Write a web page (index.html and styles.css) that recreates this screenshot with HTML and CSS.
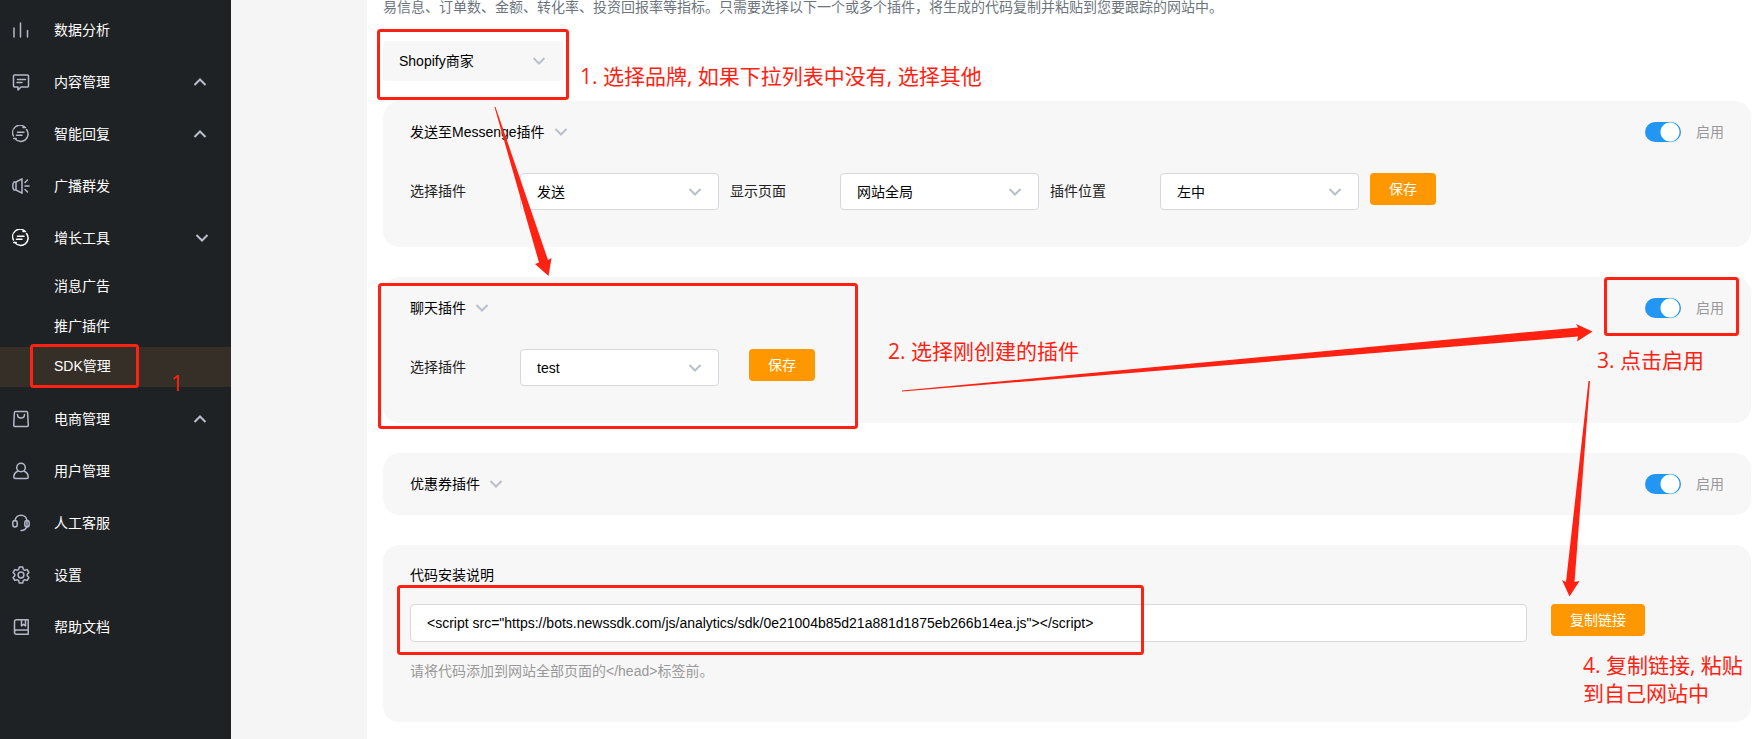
FILE: index.html
```
<!DOCTYPE html>
<html lang="zh-CN">
<head>
<meta charset="utf-8">
<title>SDK管理</title>
<link rel="stylesheet" href="styles.css">
</head>
<body>
<svg class="defs" aria-hidden="true">
  <symbol id="down" viewBox="0 0 14 10"><path d="M1.5 2 7 7.500l5.500-5.500" fill="none" stroke="currentColor" stroke-width="2"/></symbol>
  <symbol id="up" viewBox="0 0 14 10"><path d="M1.500 8 7 2.500 12.500 8" fill="none" stroke="currentColor" stroke-width="2"/></symbol>
  <symbol id="reply" viewBox="0 0 18 18"><path d="M13 2.300A7.300 7.300 0 0 0 1.500 11M3 13.600A7.300 7.300 0 0 0 14.500 4.500M5.500 7.300h6.500M4.500 10.300h5.500M11 2.500h2.500M1.700 13.500H4.200"/></symbol>
</svg>
<div class="page">
  <nav class="sidebar">
    <a class="item" href="#"><svg class="icon" viewBox="0 0 18 18"><path d="M2 7v9M8.500 2v14M15.500 9.500V16"/></svg><span class="name">数据分析</span></a>
    <a class="item" href="#"><svg class="icon" viewBox="0 0 18 18"><path d="M2.500 2h13q1 0 1 1v10q0 1-1 1H9l-3 3v-3H2.500q-1 0-1-1V3q0-1 1-1zM5.500 6.500h8M5 9.500h5"/></svg><span class="name">内容管理</span><svg class="chev"><use href="#up"/></svg></a>
    <a class="item" href="#"><svg class="icon"><use href="#reply"/></svg><span class="name">智能回复</span><svg class="chev"><use href="#up"/></svg></a>
    <a class="item" href="#"><svg class="icon" viewBox="0 0 18 18"><path d="M4 5l6-3.200v14.400L4 13zM4 5H2Q.800 6 .800 9T2 13h2M13 9h4M13 5.500l2.500-2.500M13 12.500l2.500 2.500"/></svg><span class="name">广播群发</span></a>
    <a class="item open" href="#"><svg class="icon"><use href="#reply"/></svg><span class="name">增长工具</span><svg class="chev"><use href="#down"/></svg></a>
    <div class="submenu">
      <a class="sub" href="#">消息广告</a>
      <a class="sub" href="#">推广插件</a>
      <a class="sub current" href="#">SDK管理</a>
    </div>
    <a class="item" href="#"><svg class="icon" viewBox="0 0 18 18"><path d="M3.500 1.500h11q1 0 1.100 1l.700 13q0 1-1 1H2.700q-1 0-1-1l.700-13q.100-1 1.100-1zM5.500 4.500q0 3.500 3.500 3.500t3.500-3.500"/></svg><span class="name">电商管理</span><svg class="chev"><use href="#up"/></svg></a>
    <a class="item" href="#"><svg class="icon" viewBox="0 0 18 18"><circle cx="9" cy="5.500" r="4.300"/><path d="M6 9Q1.800 11 1.800 15q0 1.500 1.500 1.500h11.400q1.500 0 1.500-1.500 0-4-4.200-6"/></svg><span class="name">用户管理</span></a>
    <a class="item" href="#"><svg class="icon" viewBox="0 0 18 18"><path d="M3 7C3.500-.800 14.500-.800 15 7v5q-1 4.500-6 4.500"/><rect x=".8" y="6.500" width="4.400" height="6.500" rx="2.200"/><rect x="12.800" y="6.500" width="4.400" height="6.500" rx="2.200"/></svg><span class="name">人工客服</span></a>
    <a class="item" href="#"><svg class="icon" viewBox="0 0 18 18"><path d="M7.300 1h3.400l.600 2.400 1.500.900 2.400-.700 1.700 2.900-1.700 1.700v1.600l1.700 1.700-1.700 2.900-2.400-.700-1.500.900-.600 2.400H7.300l-.600-2.400-1.500-.900-2.400.700-1.700-2.900 1.700-1.700V8.200L1.100 6.500l1.700-2.900 2.400.700 1.500-.900z"/><circle cx="9" cy="9" r="2.900"/></svg><span class="name">设置</span></a>
    <a class="item" href="#"><svg class="icon" viewBox="0 0 18 18"><path d="M16.200 1.800H4.500Q2.500 1.800 2.500 4v10.500q0 1.700 2 1.700h11.700zM2.500 14q0-2 2-2h11.700M9.500 2v6l2-1.800 2 1.800V2"/></svg><span class="name">帮助文档</span></a>
  </nav>

  <main class="content">
    <p class="intro">易信息、订单数、金额、转化率、投资回报率等指标。只需要选择以下一个或多个插件，将生成的代码复制并粘贴到您要跟踪的网站中。</p>
    <div class="picker brand"><select aria-label="品牌"><option>Shopify商家</option></select><svg class="chev"><use href="#down"/></svg></div>

    <section class="card">
      <header class="head">
        <button class="title" type="button">发送至Messenge插件<svg class="chev"><use href="#down"/></svg></button>
        <label class="toggle"><input type="checkbox" checked>启用</label>
      </header>
      <div class="row">
        <div class="field"><label for="send">选择插件</label><div class="picker"><select id="send"><option>发送</option></select><svg class="chev"><use href="#down"/></svg></div></div>
        <div class="field"><label for="where">显示页面</label><div class="picker"><select id="where"><option>网站全局</option></select><svg class="chev"><use href="#down"/></svg></div></div>
        <div class="field"><label for="place">插件位置</label><div class="picker"><select id="place"><option>左中</option></select><svg class="chev"><use href="#down"/></svg></div></div>
        <button class="btn" type="button">保存</button>
      </div>
    </section>

    <section class="card">
      <header class="head">
        <button class="title" type="button">聊天插件<svg class="chev"><use href="#down"/></svg></button>
        <label class="toggle"><input type="checkbox" checked>启用</label>
      </header>
      <div class="row wide">
        <div class="field"><label for="chat">选择插件</label><div class="picker"><select id="chat"><option>test</option></select><svg class="chev"><use href="#down"/></svg></div></div>
        <button class="btn" type="button">保存</button>
      </div>
    </section>

    <section class="card">
      <header class="head">
        <button class="title" type="button">优惠券插件<svg class="chev"><use href="#down"/></svg></button>
        <label class="toggle"><input type="checkbox" checked>启用</label>
      </header>
    </section>

    <section class="card">
      <label class="caption" for="code">代码安装说明</label>
      <div class="copy">
        <input class="code" id="code" type="text" readonly value="&lt;script src=&quot;https://bots.newssdk.com/js/analytics/sdk/0e21004b85d21a881d1875eb266b14ea.js&quot;&gt;&lt;/script&gt;">
        <button class="btn" type="button">复制链接</button>
      </div>
      <p class="hint">请将代码添加到网站全部页面的&lt;/head&gt;标签前。</p>
    </section>
  </main>

  <div class="notes">
    <svg class="marks" width="1753" height="739" viewBox="0 0 1753 739">
      <g class="frames">
        <rect x="31.500" y="345.500" width="106" height="41" rx="2"/>
        <rect x="378.500" y="30.500" width="189" height="68" rx="2"/>
        <rect x="379.500" y="284.500" width="477" height="143" rx="2"/>
        <rect x="1605.500" y="278.500" width="132" height="56" rx="2"/>
        <rect x="398.500" y="586.500" width="744" height="67" rx="2"/>
      </g>
      <g class="arrows">
        <path d="M494.500 107h1L548 260l3.500-2L548.500 276 535 264l4-1.500z"/>
        <path d="M902 390.500 1578 327.500 1576 324 1592.500 331.500 1577 341.500 1578 336.500 902 391.500z"/>
        <path d="M1588.500 381h1.500L1574.500 582l5-1L1569.500 596.500 1562 580l4 2z"/>
      </g>
    </svg>
    <p class="note n0">1</p>
    <p class="note n1">1. 选择品牌, 如果下拉列表中没有, 选择其他</p>
    <p class="note n2">2. 选择刚创建的插件</p>
    <p class="note n3">3. 点击启用</p>
    <p class="note n4">4. 复制链接, 粘贴<br>到自己网站中</p>
  </div>
</div>
</body>
</html>
```
FILE: styles.css
```
* { box-sizing: border-box; }
body, p { margin: 0; }
body {
  font: 14px/18px "Liberation Sans", "Noto Sans CJK SC", sans-serif;
  color: #000;
  background: #fff;
}
button, input, select { font: inherit; color: inherit; }
.defs { position: absolute; width: 0; height: 0; }
.page { position: relative; display: flex; min-height: 100vh; overflow: hidden; }

.sidebar { flex: none; width: 231px; padding-top: 4px; background: #1f2224; }
.item {
  display: flex;
  align-items: center;
  height: 52px;
  padding: 0 24px 0 12px;
  color: #fff;
  text-decoration: none;
}
.icon {
  width: 18px;
  height: 18px;
  margin-right: 24px;
  fill: none;
  stroke: #b3b9c7;
  stroke-width: 1.5;
  stroke-linejoin: round;
  stroke-linecap: round;
}
.open .icon { stroke: #fff; }
.name { flex: 1; padding-bottom: 1px; }
.chev { flex: none; width: 14px; height: 10px; color: #b9bfcb; }
.open { padding-right: 22px; }
.submenu { padding: 3px 0 6px; }
.sub {
  display: block;
  height: 40px;
  padding: 10px 0 0 54px;
  color: #fff;
  text-decoration: none;
}
.current { background: #362f28; }

.content {
  flex: 1;
  min-width: 0;
  padding: 0 2px 16px 16px;
  border-left: 136px solid #f5f5f5;
}
.intro { height: 41px; line-height: 14px; color: #6c757d; }
.picker { position: relative; width: 199px; height: 37px; }
.picker select {
  appearance: none;
  width: 100%;
  height: 100%;
  padding: 0 36px 0 16px;
  border: 1px solid #d5d8df;
  border-radius: 4px;
  background: #fff;
}
.picker .chev { position: absolute; right: 17px; top: 50%; margin-top: -5px; pointer-events: none; }
.brand { width: 180px; height: 40px; margin-bottom: 20px; }
.picker.brand select { border: 0; background: #f7f7f7; }

.card {
  margin-bottom: 30px;
  padding: 21px 27px;
  border-radius: 16px;
  background: #f7f7f7;
}
.card:last-child { margin-bottom: 0; }
.head { display: flex; align-items: center; justify-content: space-between; height: 20px; }
.title { display: flex; align-items: center; gap: 9px; padding: 0; border: 0; background: none; }
.toggle { display: flex; align-items: center; gap: 15px; color: #999; }
.toggle input {
  appearance: none;
  width: 36px;
  height: 20px;
  margin: 0;
  border-radius: 10px;
  background: radial-gradient(circle at 25px 10px, #fff 9px, #2196f3 10px);
}
.row { display: flex; align-items: flex-start; gap: 11px; padding: 31px 0 16px; }
.wide { gap: 30px; }
.field { display: flex; align-items: center; color: #222; }
.field label { width: 110px; padding-bottom: 1px; }
.field select { color: #000; }
.btn {
  flex: none;
  height: 32px;
  padding: 0 19px 1px;
  border: 0;
  border-radius: 4px;
  color: #fff;
  background: #ff9800;
}
.caption { display: block; height: 20px; }
.copy { display: flex; align-items: flex-start; gap: 24px; padding: 18px 79px 20px 0; }
.code {
  flex: 1;
  min-width: 0;
  height: 38px;
  padding: 0 16px;
  border: 1px solid #d5d8df;
  border-radius: 4px;
  background: #fff;
}
.hint { height: 39px; color: #999; }

.notes { position: absolute; left: 0; top: 0; pointer-events: none; }
.marks { display: block; }
.frames { fill: none; stroke: #ff2212; stroke-width: 3; }
.arrows { fill: #ff2212; }
.note {
  position: absolute;
  font: 400 21px/28px "Open Sans", "Noto Sans CJK SC", sans-serif;
  color: #ff2212;
  white-space: nowrap;
}
.n0 { left: 171px; top: 369px; }
.n1 { left: 580px; top: 62px; }
.n2 { left: 888px; top: 337px; }
.n3 { left: 1597px; top: 346px; }
.n4 { left: 1583px; top: 651px; }
```
